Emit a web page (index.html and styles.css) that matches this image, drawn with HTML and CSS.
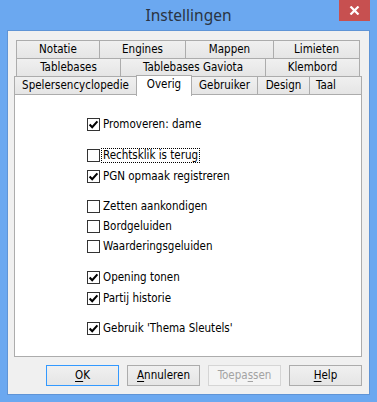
FILE: index.html
```html
<!DOCTYPE html>
<html lang="nl">
<head>
<meta charset="utf-8">
<title>Instellingen</title>
<link rel="stylesheet" href="styles.css">
</head>
<body>
<div class="window">
  <div class="titlebar">
    <span class="title">Instellingen</span>
    <div class="close" aria-label="Sluiten">
      <svg width="11" height="9" viewBox="0 0 11 9"><path d="M1.5 0.5 L9.5 8.5 M9.5 0.5 L1.5 8.5" stroke="#fff" stroke-width="2.2" fill="none"/></svg>
    </div>
  </div>
  <div class="client">
    <div class="tabs">
      <div class="tabrow back">
        <div class="tab w-notatie">Notatie</div>
        <div class="tab w-engines">Engines</div>
        <div class="tab w-mappen">Mappen</div>
        <div class="tab w-limieten">Limieten</div>
      </div>
      <div class="tabrow back">
        <div class="tab w-tablebases">Tablebases</div>
        <div class="tab w-gaviota">Tablebases Gaviota</div>
        <div class="tab w-klembord">Klembord</div>
      </div>
      <div class="tabrow front">
        <div class="tab w-spelers">Spelersencyclopedie</div>
        <div class="tab active w-overig">Overig</div>
        <div class="tab w-gebruiker">Gebruiker</div>
        <div class="tab w-design">Design</div>
        <div class="tab w-taal">Taal</div>
      </div>
    </div>
    <div class="page">
      <div class="options">
        <div class="group">
          <label class="opt"><span class="box checked"><svg width="11" height="11" viewBox="0 0 11 11"><path d="M1.6 5.6 L4.2 8.3 L9.4 2.4" stroke="#000" stroke-width="2.1" fill="none"/></svg></span><span class="lbl">Promoveren: dame</span></label>
        </div>
        <div class="group g2">
          <label class="opt"><span class="box"></span><span class="lbl focus">Rechtsklik is terug</span></label>
          <label class="opt"><span class="box checked"><svg width="11" height="11" viewBox="0 0 11 11"><path d="M1.6 5.6 L4.2 8.3 L9.4 2.4" stroke="#000" stroke-width="2.1" fill="none"/></svg></span><span class="lbl">PGN opmaak registreren</span></label>
        </div>
        <div class="group g3">
          <label class="opt"><span class="box"></span><span class="lbl">Zetten aankondigen</span></label>
          <label class="opt"><span class="box"></span><span class="lbl">Bordgeluiden</span></label>
          <label class="opt"><span class="box"></span><span class="lbl">Waarderingsgeluiden</span></label>
        </div>
        <div class="group g4">
          <label class="opt"><span class="box checked"><svg width="11" height="11" viewBox="0 0 11 11"><path d="M1.6 5.6 L4.2 8.3 L9.4 2.4" stroke="#000" stroke-width="2.1" fill="none"/></svg></span><span class="lbl">Opening tonen</span></label>
          <label class="opt"><span class="box checked"><svg width="11" height="11" viewBox="0 0 11 11"><path d="M1.6 5.6 L4.2 8.3 L9.4 2.4" stroke="#000" stroke-width="2.1" fill="none"/></svg></span><span class="lbl">Partij historie</span></label>
        </div>
        <div class="group g5">
          <label class="opt"><span class="box checked"><svg width="11" height="11" viewBox="0 0 11 11"><path d="M1.6 5.6 L4.2 8.3 L9.4 2.4" stroke="#000" stroke-width="2.1" fill="none"/></svg></span><span class="lbl">Gebruik 'Thema Sleutels'</span></label>
        </div>
      </div>
    </div>
    <div class="buttons">
      <div class="btn default"><u>O</u>K</div>
      <div class="btn"><u>A</u>nnuleren</div>
      <div class="btn disabled">Toepa<u>s</u>sen</div>
      <div class="btn"><u>H</u>elp</div>
    </div>
  </div>
</div>
</body>
</html>
```

FILE: styles.css
```css
html, body {
  margin: 0;
  padding: 0;
}

body {
  width: 377px;
  height: 402px;
  overflow: hidden;
  font-family: "DejaVu Sans Condensed", "DejaVu Sans", sans-serif;
  font-stretch: condensed;
  font-size: 11.5px;
  color: #000;
}

.window {
  width: 377px;
  height: 402px;
  box-sizing: border-box;
  background: #6ba8f0;
  padding: 0 7px 7px 7px;
  display: flex;
  flex-direction: column;
}

.titlebar {
  height: 30px;
  flex: none;
  display: flex;
  justify-content: center;
  position: relative;
}

.title {
  font-family: "Noto Sans", "Open Sans", sans-serif;
  font-stretch: normal;
  font-size: 15.5px;
  line-height: 31px;
  color: #2a3442;
}

.close {
  position: absolute;
  top: 0;
  right: 0;
  width: 31px;
  height: 21px;
  background: #c75050;
  display: flex;
  align-items: center;
  justify-content: center;
}

.client {
  flex: 1;
  background: #f0f0f0;
  border: 1px solid #5f94d6;
  display: flex;
  flex-direction: column;
}

.tabs {
  padding-top: 9px;
  padding-left: 6px;
  display: flex;
  flex-direction: column;
}

.tabrow {
  display: flex;
  height: 19px;
  align-items: flex-end;
}

.tabrow + .tabrow {
  margin-top: -1px;
}

.tabrow.back {
  margin-left: 2px;
}

.tab {
  flex: none;
  box-sizing: border-box;
  height: 19px;
  border: 1px solid #acacac;
  background: linear-gradient(#f0f0f0, #e5e5e5);
  text-align: center;
  line-height: 17px;
  color: #000;
  white-space: nowrap;
}

.tab + .tab {
  margin-left: -1px;
}

.tab.active {
  height: 21px;
  background: #fff;
  border-bottom: none;
  line-height: 17px;
  position: relative;
  z-index: 2;
  margin-bottom: -1px;
}

.w-notatie { width: 84px; }
.w-engines { width: 87px; }
.w-mappen { width: 89px; }
.w-limieten { width: 87px; }
.w-tablebases { width: 105px; }
.w-gaviota { width: 146px; }
.w-klembord { width: 95px; }
.w-spelers { width: 123px; }
.w-overig { width: 56px; }
.w-gebruiker { width: 67px; }
.w-design { width: 53px; }
.w-taal {
  width: 53px;
  text-align: left;
  padding-left: 6px;
}

.page {
  margin-left: 6px;
  margin-top: -1px;
  width: 348px;
  height: 263px;
  box-sizing: border-box;
  background: #fff;
  border: 1px solid #acacac;
  position: relative;
  z-index: 1;
}

.options {
  padding-top: 19px;
  padding-left: 72px;
  display: flex;
  flex-direction: column;
}

.group {
  display: flex;
  flex-direction: column;
  gap: 1px;
}

.group.g3 {
  gap: 0;
}

.g2 { margin-top: 11px; }
.g3 { margin-top: 10px; }
.g4 { margin-top: 11px; }
.g5 { margin-top: 10px; }

.opt {
  height: 20px;
  display: flex;
  align-items: center;
}

.box {
  width: 13px;
  height: 13px;
  box-sizing: border-box;
  border: 1px solid #333;
  background: #fff;
  display: flex;
  align-items: center;
  justify-content: center;
  margin-right: 2px;
}

.lbl {
  padding: 0 1px;
  line-height: 13px;
}

.lbl.focus {
  outline: 1px dotted #000;
}

.buttons {
  display: flex;
  gap: 8px;
  padding-left: 38px;
  margin-top: 8px;
}

.btn {
  width: 73px;
  height: 21px;
  box-sizing: border-box;
  border: 1px solid #acacac;
  background: linear-gradient(#f0f0f0, #e5e5e5);
  text-align: center;
  line-height: 19px;
  color: #000;
}

.btn.default {
  border-color: #3399ff;
}

.btn.disabled {
  border-color: #d5d5d5;
  background: #f4f4f4;
  color: #a3a3a3;
}

.btn u {
  text-decoration: underline;
  text-underline-offset: 2px;
}
```
